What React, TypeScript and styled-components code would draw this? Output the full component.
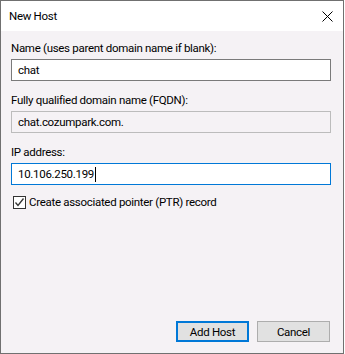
import { useState } from "react";
import styled, { createGlobalStyle } from "styled-components";

const GlobalStyle = createGlobalStyle`
  html, body {
    margin: 0;
    padding: 0;
    background: #ffffff;
  }
  body {
    font-family: "Segoe UI", Roboto, "Liberation Sans", Arial, sans-serif;
    font-size: 11.5px;
    letter-spacing: -0.3px;
    color: #000000;
  }
`;

const Window = styled.div`
  width: 344px;
  height: 354px;
  box-sizing: border-box;
  border: 1px solid #707070;
  display: flex;
  flex-direction: column;
  background: #f5f2f5;
`;

const TitleBar = styled.div`
  height: 30px;
  flex: none;
  background: #ffffff;
  display: flex;
  align-items: center;
  justify-content: space-between;
  padding: 0 9px 0 8px;
`;

const Title = styled.span`
  font-size: 11.5px;
  line-height: 15px;
`;

const CloseButton = styled.button`
  width: 14px;
  height: 14px;
  padding: 0;
  border: none;
  background: transparent;
  display: flex;
  align-items: center;
  justify-content: center;
`;

const Body = styled.div`
  flex: 1;
  display: flex;
  flex-direction: column;
  padding: 10px 12px 11px 10px;
`;

const Field = styled.div`
  display: flex;
  flex-direction: column;
  gap: 3px;
  margin-bottom: 12px;
`;

const Label = styled.label`
  line-height: 15px;
`;

interface InputBoxProps {
  $focused?: boolean;
  $readOnly?: boolean;
}

const InputBox = styled.div<InputBoxProps>`
  height: 22px;
  box-sizing: border-box;
  border: 1px solid
    ${(p) => (p.$focused ? "#0078d7" : p.$readOnly ? "#bcbcbc" : "#7a7a7a")};
  background: ${(p) => (p.$readOnly ? "#f5f2f5" : "#ffffff")};
  display: flex;
  align-items: center;
  padding-left: 6px;
  line-height: 15px;
`;

const Caret = styled.span`
  display: inline-block;
  width: 1px;
  height: 15px;
  background: #000000;
  margin-left: 1px;
`;

const CheckRow = styled.label`
  display: flex;
  align-items: center;
  gap: 3px;
  margin-top: -2px;
  padding-left: 2px;
  line-height: 15px;
`;

const CheckBox = styled.span`
  width: 13px;
  height: 13px;
  box-sizing: border-box;
  border: 1px solid #333333;
  background: #ffffff;
  display: flex;
  align-items: center;
  justify-content: center;
`;

const Footer = styled.div`
  margin-top: auto;
  display: flex;
  justify-content: flex-end;
  gap: 8px;
  padding-right: 1px;
`;

interface ButtonProps {
  $default?: boolean;
}

const DialogButton = styled.button<ButtonProps>`
  width: 73px;
  height: 21px;
  box-sizing: border-box;
  border: ${(p) => (p.$default ? "2px solid #0078d7" : "1px solid #adadad")};
  background: #e1e1e1;
  font-family: inherit;
  font-size: 11.5px;
  letter-spacing: -0.3px;
  color: #000000;
  padding: 0;
`;

const App = () => {
  const [ptr, setPtr] = useState(true);

  return (
    <>
      <GlobalStyle />
      <Window>
        <TitleBar>
          <Title>New Host</Title>
          <CloseButton aria-label="Close">
            <svg width="11" height="11" viewBox="0 0 11 11">
              <path d="M0.5 0.5 L10.5 10.5 M10.5 0.5 L0.5 10.5" stroke="#000" strokeWidth="1" />
            </svg>
          </CloseButton>
        </TitleBar>
        <Body>
          <Field>
            <Label>Name (uses parent domain name if blank):</Label>
            <InputBox>chat</InputBox>
          </Field>
          <Field>
            <Label>Fully qualified domain name (FQDN):</Label>
            <InputBox $readOnly>chat.cozumpark.com.</InputBox>
          </Field>
          <Field>
            <Label>IP address:</Label>
            <InputBox $focused>
              10.106.250.199
              <Caret />
            </InputBox>
          </Field>
          <CheckRow onClick={() => setPtr(!ptr)}>
            <CheckBox>
              {ptr && (
                <svg width="11" height="11" viewBox="0 0 11 11">
                  <path d="M1.5 5.5 L4 8.5 L9.5 1.5" stroke="#333" strokeWidth="1.3" fill="none" />
                </svg>
              )}
            </CheckBox>
            Create associated pointer (PTR) record
          </CheckRow>
          <Footer>
            <DialogButton $default>Add Host</DialogButton>
            <DialogButton>Cancel</DialogButton>
          </Footer>
        </Body>
      </Window>
    </>
  );
};

export default App;
